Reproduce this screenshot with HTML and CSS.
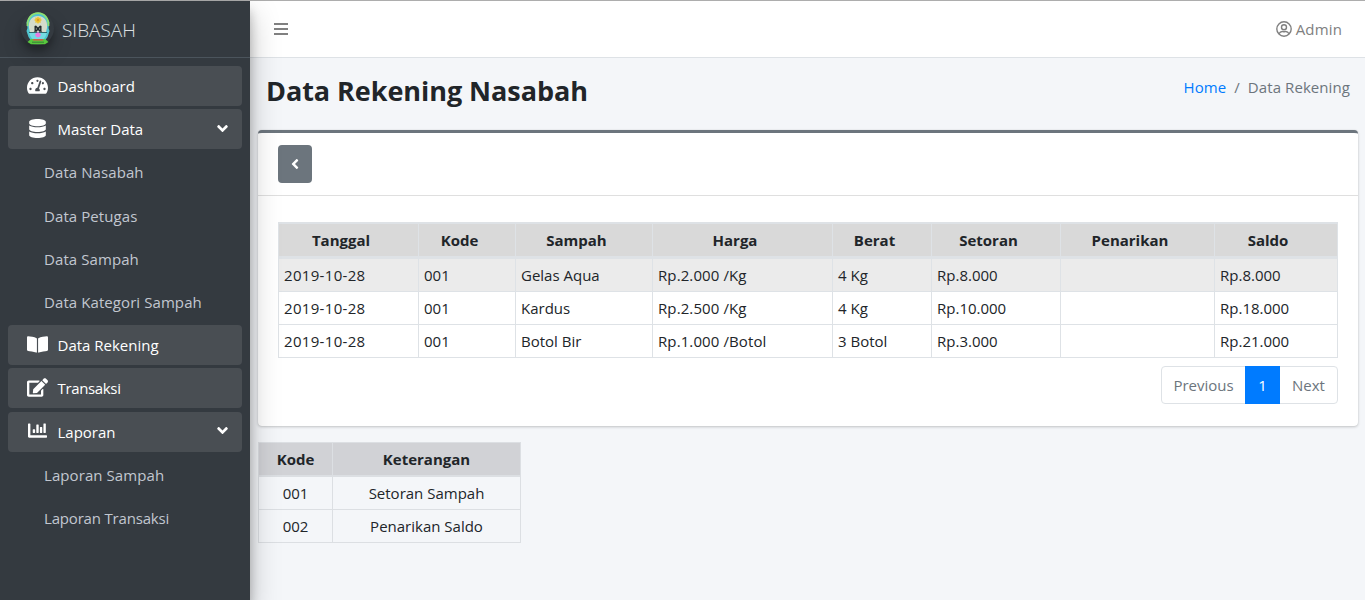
FILE: index.html
```html
<!DOCTYPE html>
<html lang="id">
<head>
<meta charset="utf-8">
<title>SIBASAH - Data Rekening</title>
<link rel="stylesheet" href="styles.css">
</head>
<body>
<div class="wrapper">
  <aside class="sidebar">
    <a class="brand">
      <span class="brand-logo">
        <svg width="24" height="33" viewBox="0 0 24 33">
          <path d="M6 30L2.500 25 0.500 19 1.500 16 0.500 10 4 4 9 1 12 0.500 15 1 20 4 23.500 10 22.500 16 23.500 19 21.500 25 18 30z" fill="#4fc4cf"/>
          <path d="M1.500 14C1 6 6 1.200 12 1.200S23 6 22.500 14" fill="none" stroke="#8fe070" stroke-width="1.800"/>
          <path d="M3 16C2 8 6.500 4 12 4s10 4 9 12c-.6 5-4 9-5 13H8c-1-4-4.400-8-5-13z" fill="#d4dccb"/>
          <path d="M3 20c1 5 3 7 5 8h8c2-1 4-3 5-8z" fill="#73dce2"/>
          <path d="M12 4.200l1 1.500 1.800-.3-.3 1.700 1.500 1-1.500 1 .3 1.700-1.800-.3-1 1.500-1-1.500-1.800.3.300-1.700-1.500-1 1.500-1-.3-1.700 1.800.3z" fill="#ecc32f"/>
          <circle cx="12" cy="8" r="1.200" fill="#d99b27"/>
          <path d="M8.500 14l1.500-.5 2 2 2-2 1.500.5v5l.8.800h-3L12 18l-1.300 1.800h-3l.8-.8z" fill="#20282b"/>
          <path d="M10.300 15.800v2M13.700 15.800v2" stroke="#b9c3ba" stroke-width=".7"/>
          <path d="M3 20.500h18" stroke="#214b50" stroke-width=".8"/>
          <path d="M12 20l3 2.200-1 2.300-2 1-2-1-1-2.300z" fill="#e87be0"/>
          <path d="M1.500 30l3.500-3h14l3.500 3-3.500 2.200H5z" fill="#58c83d"/>
          <path d="M7 27.800h10" stroke="#d9544b" stroke-width="1.400"/>
          <path d="M6 30.200h12" stroke="#397f38" stroke-width="1"/>
        </svg>
      </span>
      <span class="brand-text">SIBASAH</span>
    </a>
    <nav class="menu">
      <a class="item"><svg class="icon" viewBox="0 0 576 512" width="22" height="19"><path d="M288 32C128.940 32 0 160.940 0 320c0 52.800 14.250 102.260 39.060 144.800 5.610 9.620 16.300 15.200 27.440 15.200h443c11.140 0 21.830-5.580 27.440-15.200C561.750 422.260 576 372.800 576 320c0-159.060-128.940-288-288-288zm0 64c14.710 0 26.580 10.130 30.320 23.650-1.110 2.260-2.640 4.230-3.450 6.670l-9.220 27.670c-5.130 3.490-10.970 6.010-17.640 6.010-17.670 0-32-14.330-32-32S270.330 96 288 96zM96 384c-17.670 0-32-14.330-32-32s14.330-32 32-32 32 14.330 32 32-14.330 32-32 32zm48-160c-17.670 0-32-14.330-32-32s14.330-32 32-32 32 14.330 32 32-14.330 32-32 32zm246.770-72.410l-61.330 184C343.130 347.330 352 364.540 352 384c0 11.720-3.380 22.550-8.880 32H232.880c-5.500-9.450-8.880-20.280-8.880-32 0-33.940 26.500-61.430 59.900-63.590l61.340-184.010c4.170-12.560 17.730-19.450 30.360-15.170 12.570 4.190 19.350 17.790 15.170 30.360zm14.660 57.200l15.520-46.550c3.470-1.290 7.130-2.230 11.050-2.230 17.670 0 32 14.330 32 32s-14.330 32-32 32c-11.380-.01-20.890-6.280-26.570-15.220zM480 384c-17.670 0-32-14.330-32-32s14.330-32 32-32 32 14.330 32 32-14.330 32-32 32z"/></svg><span>Dashboard</span></a>
      <a class="item"><svg class="icon" viewBox="0 0 448 512" width="22" height="19"><path d="M448 73.143v45.714C448 159.143 347.667 192 224 192S0 159.143 0 118.857V73.143C0 32.857 100.333 0 224 0s224 32.857 224 73.143zM448 176v102.857C448 319.143 347.667 352 224 352S0 319.143 0 278.857V176c48.125 33.143 136.208 48.572 224 48.572S399.874 209.143 448 176zm0 160v102.857C448 479.143 347.667 512 224 512S0 479.143 0 438.857V336c48.125 33.143 136.208 48.572 224 48.572S399.874 369.143 448 336z"/></svg><span>Master Data</span><svg class="arrow" viewBox="0 0 320 512" width="11" height="17"><path d="M143 352.300L7 216.300c-9.400-9.400-9.400-24.600 0-33.900l22.600-22.600c9.400-9.400 24.600-9.400 33.900 0l96.400 96.400 96.400-96.400c9.400-9.400 24.600-9.400 33.900 0l22.600 22.600c9.400 9.400 9.400 24.600 0 33.900l-136 136c-9.200 9.400-24.400 9.400-33.800 0z"/></svg></a>
      <a class="sub">Data Nasabah</a>
      <a class="sub">Data Petugas</a>
      <a class="sub">Data Sampah</a>
      <a class="sub">Data Kategori Sampah</a>
      <a class="item"><svg class="icon" viewBox="0 0 576 512" width="22" height="19"><path d="M542.220 32.050c-54.800 3.110-163.720 14.430-230.960 55.590-4.640 2.840-7.270 7.890-7.270 13.170v363.870c0 11.550 12.630 18.850 23.280 13.490 69.180-34.820 169.230-44.320 218.700-46.920 16.890-.89 30.020-14.430 30.020-30.660V62.750c.01-17.710-15.350-31.740-33.770-30.700zM264.730 87.640C197.500 46.480 88.580 35.170 33.780 32.050 15.360 31.010 0 45.040 0 62.750V400.600c0 16.240 13.130 29.780 30.020 30.660 49.490 2.600 149.590 12.110 218.770 46.950 10.620 5.350 23.210-1.940 23.210-13.460V100.630c0-5.290-2.620-10.140-7.270-12.990z"/></svg><span>Data Rekening</span></a>
      <a class="item"><svg class="icon" viewBox="0 0 576 512" width="22" height="19"><path d="M402.600 83.200l90.200 90.200c3.800 3.800 3.800 10 0 13.800L274.400 405.600l-92.800 10.300c-12.400 1.400-22.900-9.100-21.500-21.500l10.300-92.800L388.800 83.200c3.800-3.800 10-3.800 13.800 0zm162-22.900l-48.800-48.800c-15.200-15.200-39.900-15.200-55.200 0l-35.400 35.400c-3.800 3.800-3.800 10 0 13.800l90.200 90.200c3.800 3.800 10 3.800 13.800 0l35.400-35.400c15.200-15.300 15.200-40 0-55.200zM384 346.200V448H64V128h229.800c3.200 0 6.200-1.300 8.500-3.500l40-40c7.600-7.600 2.200-20.500-8.500-20.500H48C21.500 64 0 85.500 0 112v352c0 26.500 21.500 48 48 48h352c26.500 0 48-21.500 48-48V306.200c0-10.700-12.900-16-20.500-8.500l-40 40c-2.200 2.300-3.500 5.300-3.500 8.500z"/></svg><span class="tight">Transaksi</span></a>
      <a class="item"><svg class="icon" viewBox="0 0 512 512" width="22" height="19"><path d="M332.800 320h38.400c6.400 0 12.800-6.400 12.800-12.800V172.800c0-6.400-6.400-12.800-12.800-12.800h-38.400c-6.400 0-12.800 6.400-12.800 12.800v134.400c0 6.400 6.400 12.800 12.800 12.800zm96 0h38.400c6.400 0 12.800-6.400 12.800-12.800V76.800c0-6.400-6.400-12.800-12.800-12.800h-38.400c-6.400 0-12.800 6.400-12.800 12.800v230.400c0 6.400 6.400 12.800 12.800 12.800zm-288 0h38.400c6.400 0 12.800-6.400 12.800-12.800v-70.400c0-6.400-6.400-12.800-12.800-12.800h-38.400c-6.400 0-12.800 6.400-12.800 12.800v70.400c0 6.400 6.400 12.800 12.800 12.800zm96 0h38.400c6.400 0 12.800-6.400 12.800-12.800V108.800c0-6.400-6.400-12.800-12.800-12.800h-38.400c-6.400 0-12.800 6.400-12.800 12.800v198.400c0 6.400 6.400 12.800 12.800 12.800zM496 384H64V80c0-8.840-7.160-16-16-16H16C7.160 64 0 71.160 0 80v336c0 17.670 14.330 32 32 32h464c8.840 0 16-7.160 16-16v-32c0-8.840-7.160-16-16-16z"/></svg><span>Laporan</span><svg class="arrow" viewBox="0 0 320 512" width="11" height="17"><path d="M143 352.300L7 216.300c-9.400-9.400-9.400-24.600 0-33.900l22.600-22.600c9.400-9.400 24.600-9.400 33.900 0l96.400 96.400 96.400-96.400c9.400-9.400 24.600-9.400 33.900 0l22.600 22.600c9.400 9.400 9.400 24.600 0 33.900l-136 136c-9.200 9.400-24.400 9.400-33.800 0z"/></svg></a>
      <a class="sub">Laporan Sampah</a>
      <a class="sub tight-sub">Laporan Transaksi</a>
    </nav>
  </aside>
  <div class="main">
    <header class="navbar">
      <svg class="bars" width="14" height="12" viewBox="0 0 14 12"><path d="M0 0h14v2H0zM0 5h14v2H0zM0 10h14v2H0z"/></svg>
      <div class="user">
        <svg width="16" height="16" viewBox="0 0 16 16"><circle cx="8" cy="8" r="7.200"/><circle cx="8" cy="6.200" r="2.500"/><path d="M3 12.800c.8-1.600 2-2.300 3.200-2.300.7 0 1 .3 1.800.3s1.100-.3 1.800-.3c1.200 0 2.400.7 3.200 2.300"/></svg>
        <span>Admin</span>
      </div>
    </header>
    <div class="page-head">
      <h1>Data Rekening Nasabah</h1>
      <div class="crumbs"><a>Home</a><span class="slash">/</span><span>Data Rekening</span></div>
    </div>
    <section class="card">
      <div class="card-header">
        <a class="back"><svg viewBox="0 0 256 512" width="8" height="16"><path d="M31.700 239l136-136c9.400-9.400 24.600-9.400 33.900 0l22.600 22.600c9.400 9.400 9.400 24.600 0 33.900L127.900 256l96.400 96.400c9.400 9.400 9.400 24.600 0 33.900L201.700 409c-9.400 9.400-24.600 9.400-33.900 0l-136-136c-9.500-9.400-9.500-24.600-.1-34z"/></svg></a>
      </div>
      <div class="card-body">
        <table class="data">
          <colgroup><col class="c1"><col class="c2"><col class="c3"><col class="c4"><col class="c5"><col class="c6"><col class="c7"><col class="c8"></colgroup>
          <thead><tr><th>Tanggal</th><th>Kode</th><th>Sampah</th><th>Harga</th><th>Berat</th><th>Setoran</th><th>Penarikan</th><th>Saldo</th></tr></thead>
          <tbody>
            <tr class="active"><td class="date">2019-10-28</td><td>001</td><td>Gelas Aqua</td><td class="price">Rp.2.000 /Kg</td><td>4 Kg</td><td>Rp.8.000</td><td></td><td>Rp.8.000</td></tr>
            <tr><td class="date">2019-10-28</td><td>001</td><td>Kardus</td><td class="price">Rp.2.500 /Kg</td><td>4 Kg</td><td>Rp.10.000</td><td></td><td>Rp.18.000</td></tr>
            <tr><td class="date">2019-10-28</td><td>001</td><td>Botol Bir</td><td class="price">Rp.1.000 /Botol</td><td>3 Botol</td><td>Rp.3.000</td><td></td><td>Rp.21.000</td></tr>
          </tbody>
        </table>
        <div class="pages"><a class="prev">Previous</a><a class="current">1</a><a class="next">Next</a></div>
      </div>
    </section>
    <table class="legend">
      <colgroup><col class="k1"><col class="k2"></colgroup>
      <thead><tr><th>Kode</th><th>Keterangan</th></tr></thead>
      <tbody>
        <tr><td>001</td><td>Setoran Sampah</td></tr>
        <tr><td>002</td><td>Penarikan Saldo</td></tr>
      </tbody>
    </table>
  </div>
</div>
</body>
</html>
```
FILE: styles.css
```css
* { box-sizing: border-box; }
body {
  margin: 0;
  font: 15px/24px "Open Sans", "Noto Sans", sans-serif;
  color: #212529;
  background: #f4f6f9;
  overflow: hidden;
}
svg { display: block; flex: none; }
.wrapper {
  display: flex;
  height: 600px;
  border-top: 1px solid #adadad;
}
.sidebar {
  position: relative;
  z-index: 2;
  flex: none;
  width: 250px;
  background: #343a40;
  box-shadow: 0 14px 28px rgba(0,0,0,.25), 0 10px 10px rgba(0,0,0,.22);
}
.brand {
  display: flex;
  align-items: center;
  height: 57px;
  padding-left: 21px;
  border-bottom: 1px solid #4b545c;
}
.brand-logo {
  display: flex;
  justify-content: center;
  align-items: center;
  width: 33px;
  height: 33px;
  margin: 0 8px 2px 0;
  border-radius: 50%;
  box-shadow: 0 10px 20px rgba(0,0,0,.19), 0 6px 6px rgba(0,0,0,.23);
}
.brand-text {
  padding-top: 1px;
  font-size: 19px;
  font-weight: 300;
  color: #dde0e2;
}
.menu {
  display: flex;
  flex-direction: column;
  gap: 3.200px;
  padding: 8px;
}
.item {
  display: flex;
  align-items: center;
  height: 40px;
  padding: 0 15px 0 18px;
  border-radius: 4px;
  background: #494e53;
  color: #fff;
}
.icon { margin: 0 9px 2px 0; fill: #fff; }
.item .icon { width: 21px; margin-left: .5px; margin-right: 10px; }
.arrow { margin: 0 -1px 2px auto; fill: #fff; }
.tight { letter-spacing: -.35px; }
.sub {
  height: 40px;
  padding-left: 36px;
  line-height: 40px;
  letter-spacing: .08px;
  color: #c2c7d0;
}
.tight-sub { letter-spacing: -.18px; }
.main { flex: 1; min-width: 0; }
.navbar {
  display: flex;
  justify-content: space-between;
  align-items: center;
  height: 57px;
  padding: 0 23px 0 24px;
  background: #fff;
  border-bottom: 1px solid #dee2e6;
}
.bars { fill: #808080; }
.user { display: flex; align-items: center; gap: 4px; color: #808080; letter-spacing: .15px; }
.user svg { fill: none; stroke: #808080; stroke-width: 1.400; }
.page-head {
  display: flex;
  justify-content: space-between;
  height: 72px;
  padding: 15px 15px 0 16px;
}
h1 { margin: 0; font-size: 27px; line-height: 36px; font-weight: 700; letter-spacing: -.05px; }
.crumbs { display: flex; gap: 8px; padding-top: 2px; color: #6c757d; letter-spacing: .08px; }
.crumbs a { color: #007bff; }
.card {
  width: 1100px;
  height: 296px;
  margin: 0 0 16px 8px;
  background: #fff;
  border-top: 3px solid #6c757d;
  border-radius: 4px;
  box-shadow: 0 0 1px rgba(0,0,0,.125), 0 1px 3px rgba(0,0,0,.2);
}
.card-header {
  height: 63px;
  padding: 12px 20px;
  border-bottom: 1px solid #dfdfdf;
}
.back {
  display: flex;
  align-items: center;
  justify-content: center;
  width: 34px;
  height: 38px;
  border-radius: 4px;
  background: #6c757d;
}
.back svg { fill: #fff; }
.card-body { padding: 26px 20px 0; }
table { border-spacing: 0; table-layout: fixed; }
th, td {
  height: 33px;
  padding: 0 5px;
  border: solid #dee2e6;
  border-width: 0 0 1px 1px;
  text-align: left;
  white-space: nowrap;
}
tr > :last-child { border-right-width: 1px; }
th { text-align: center; font-weight: 700; }
.data { width: 1060px; }
.data th {
  height: 37px;
  padding-right: 20px;
  border-width: 2px 0 3px 1px;
  background: #d9d9d9;
}
.data th:last-child { border-right-width: 1px; padding-right: 21px; }
.active td { background: #ebebeb; }
.date { letter-spacing: .32px; }
.price { letter-spacing: .1px; }
.c1 { width: 140px; }
.c2 { width: 97px; }
.c3 { width: 137px; }
.c4 { width: 180px; }
.c5 { width: 99px; }
.c6 { width: 129px; }
.c7 { width: 154px; }
.c8 { width: 124px; }
.pages {
  display: flex;
  width: 177px;
  height: 38px;
  margin: 8px 0 0 auto;
  border: 1px solid #dee2e6;
  border-radius: 4px;
  color: #6c757d;
  line-height: 36px;
  text-align: center;
}
.prev { width: 83px; }
.next { width: 57px; }
.current {
  width: 35px;
  height: 38px;
  margin-top: -1px;
  background: #007bff;
  color: #fff;
  line-height: 38px;
}
.legend { width: 263px; margin-left: 8px; }
.legend th, .legend td { text-align: center; border-color: #dcdfe3; }
.legend th { height: 35px; border-width: 1px 0 2px 1px; background: #d1d2d6; }
.legend th:last-child { border-right-width: 1px; }
.k1 { width: 74px; }
.k2 { width: 189px; }
```
